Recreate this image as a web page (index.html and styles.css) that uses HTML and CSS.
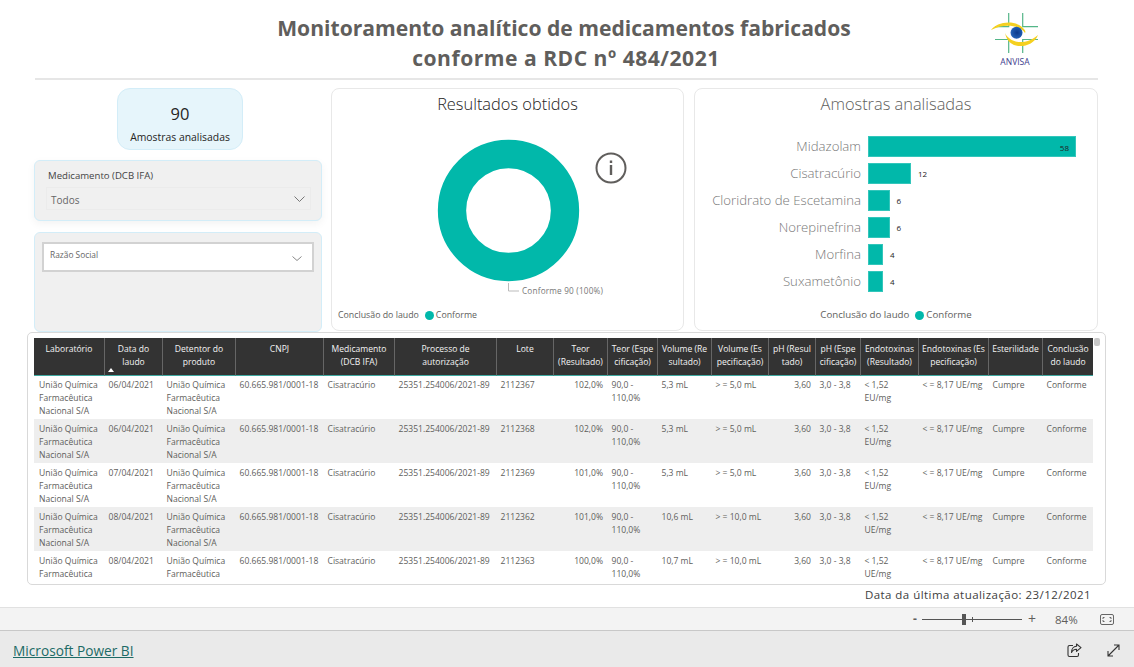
FILE: index.html
```html
<!DOCTYPE html>
<html lang="pt-BR">
<head>
<meta charset="utf-8">
<title>Monitoramento analítico de medicamentos</title>
<link rel="stylesheet" href="styles.css">
</head>
<body>
<main class="report">
  <header class="head">
    <h1 class="title">Monitoramento analítico de medicamentos fabricados<br><span class="title-second">conforme a RDC nº 484/2021</span></h1>
    <svg class="logo" width="50" height="58" viewBox="0 0 50 58">
      <defs>
        <radialGradient id="iris" cx=".55" cy=".5" r=".6">
          <stop offset="0" stop-color="#0b3a8c"/>
          <stop offset=".75" stop-color="#1f5cb0"/>
          <stop offset="1" stop-color="#3f78c4"/>
        </radialGradient>
      </defs>
      <g fill="none" stroke="#54b688" stroke-width="1.200">
        <path d="M5 14.700H18.700V1M32.700 1V14.700H48M5 27.500H18.700V41M32.700 41V27.500H48"/>
      </g>
      <path d="M1 18C6 11 22 7 32 15C35 18 36 19 35 21C30 13 14 11 1 18Z" fill="#f5d020"/>
      <path d="M15 21C19 30 34 35 48 23C44 33 32 36 24 33C19 31 16 26 15 21Z" fill="#f5d020"/>
      <circle cx="26.500" cy="20.700" r="6" fill="url(#iris)"/>
      <text class="logo-text" x="25" y="53" text-anchor="middle">ANVISA</text>
    </svg>
  </header>

  <section class="visuals">
    <div class="left">
      <div class="kpi">
        <div class="kpi-value">90</div>
        <div class="kpi-label">Amostras analisadas</div>
      </div>
      <div class="slicer slicer-a">
        <div class="slicer-title">Medicamento (DCB IFA)</div>
        <div class="drop">
          <span>Todos</span>
          <svg width="11" height="6" viewBox="0 0 11 6"><path d="M.5.5l5 5 5-5" fill="none" stroke="#777"/></svg>
        </div>
      </div>
      <div class="slicer slicer-b">
        <div class="drop-white">
          <span>Razão Social</span>
          <svg width="10" height="5" viewBox="0 0 10 5"><path d="M.5.5l4.500 4 4.500-4" fill="none" stroke="#888"/></svg>
        </div>
      </div>
    </div>

    <div class="card donut-card">
      <h2 class="card-title dark">Resultados obtidos</h2>
      <svg class="donut" width="351" height="181" viewBox="0 0 351 181">
        <circle cx="176.500" cy="82.500" r="56.500" fill="none" stroke="#01b8aa" stroke-width="28.300"/>
        <path d="M176.500 155V163H187" fill="none" stroke="#bbb"/>
        <text class="donut-label" x="190" y="165.500">Conforme 90 (100%)</text>
      </svg>
      <svg class="info" width="32" height="32" viewBox="0 0 32 32">
        <circle cx="16" cy="16" r="14.500" fill="none" stroke="#605e5c" stroke-width="2"/>
        <rect x="14.800" y="13" width="2.400" height="10" fill="#605e5c"/>
        <rect x="14.800" y="8.500" width="2.400" height="2.500" fill="#605e5c"/>
      </svg>
      <div class="legend legend-left">
        <span>Conclusão do laudo</span><i class="dot"></i><span>Conforme</span>
      </div>
    </div>

    <div class="card bar-card">
      <h2 class="card-title">Amostras analisadas</h2>
      <div class="bars">
        <div class="bar-label">Midazolam</div><div class="bar-cell"><div class="bar bar-58"><b>58</b></div></div>
        <div class="bar-label">Cisatracúrio</div><div class="bar-cell"><div class="bar bar-12"></div><b>12</b></div>
        <div class="bar-label">Cloridrato de Escetamina</div><div class="bar-cell"><div class="bar bar-6"></div><b>6</b></div>
        <div class="bar-label">Norepinefrina</div><div class="bar-cell"><div class="bar bar-6"></div><b>6</b></div>
        <div class="bar-label">Morfina</div><div class="bar-cell"><div class="bar bar-4"></div><b>4</b></div>
        <div class="bar-label">Suxametônio</div><div class="bar-cell"><div class="bar bar-4"></div><b>4</b></div>
      </div>
      <div class="legend legend-center">
        <span>Conclusão do laudo</span><i class="dot"></i><span>Conforme</span>
      </div>
    </div>
  </section>

  <section class="table-card">
    <i class="thumb"></i>
    <table class="grid">
      <thead>
        <tr>
          <th>Laboratório</th>
          <th>Data do<br>laudo<i class="sort"></i></th>
          <th>Detentor do<br>produto</th>
          <th>CNPJ</th>
          <th>Medicamento<br>(DCB IFA)</th>
          <th>Processo de<br>autorização</th>
          <th>Lote</th>
          <th>Teor<br>(Resultado)</th>
          <th>Teor (Espe<br>cificação)</th>
          <th>Volume (Re<br>sultado)</th>
          <th>Volume (Es<br>pecificação)</th>
          <th>pH (Resul<br>tado)</th>
          <th>pH (Espe<br>cificação)</th>
          <th>Endotoxinas<br>(Resultado)</th>
          <th>Endotoxinas (Es<br>pecificação)</th>
          <th>Esterilidade</th>
          <th>Conclusão<br>do laudo</th>
        </tr>
      </thead>
      <tbody>
        <tr><td>União Química Farmacêutica Nacional S/A</td><td>06/04/2021</td><td>União Química Farmacêutica Nacional S/A</td><td>60.665.981/0001-18</td><td>Cisatracúrio</td><td>25351.254006/2021-89</td><td>2112367</td><td class="num">102,0%</td><td>90,0 - 110,0%</td><td>5,3 mL</td><td>&gt; = 5,0 mL</td><td class="num">3,60</td><td>3,0 - 3,8</td><td>&lt; 1,52 EU/mg</td><td>&lt; = 8,17 UE/mg</td><td>Cumpre</td><td>Conforme</td></tr>
        <tr><td>União Química Farmacêutica Nacional S/A</td><td>06/04/2021</td><td>União Química Farmacêutica Nacional S/A</td><td>60.665.981/0001-18</td><td>Cisatracúrio</td><td>25351.254006/2021-89</td><td>2112368</td><td class="num">102,0%</td><td>90,0 - 110,0%</td><td>5,3 mL</td><td>&gt; = 5,0 mL</td><td class="num">3,60</td><td>3,0 - 3,8</td><td>&lt; 1,52 EU/mg</td><td>&lt; = 8,17 UE/mg</td><td>Cumpre</td><td>Conforme</td></tr>
        <tr><td>União Química Farmacêutica Nacional S/A</td><td>07/04/2021</td><td>União Química Farmacêutica Nacional S/A</td><td>60.665.981/0001-18</td><td>Cisatracúrio</td><td>25351.254006/2021-89</td><td>2112369</td><td class="num">101,0%</td><td>90,0 - 110,0%</td><td>5,3 mL</td><td>&gt; = 5,0 mL</td><td class="num">3,60</td><td>3,0 - 3,8</td><td>&lt; 1,52 EU/mg</td><td>&lt; = 8,17 UE/mg</td><td>Cumpre</td><td>Conforme</td></tr>
        <tr><td>União Química Farmacêutica Nacional S/A</td><td>08/04/2021</td><td>União Química Farmacêutica Nacional S/A</td><td>60.665.981/0001-18</td><td>Cisatracúrio</td><td>25351.254006/2021-89</td><td>2112362</td><td class="num">101,0%</td><td>90,0 - 110,0%</td><td>10,6 mL</td><td>&gt; = 10,0 mL</td><td class="num">3,60</td><td>3,0 - 3,8</td><td>&lt; 1,52 UE/mg</td><td>&lt; = 8,17 UE/mg</td><td>Cumpre</td><td>Conforme</td></tr>
        <tr><td>União Química Farmacêutica</td><td>08/04/2021</td><td>União Química Farmacêutica</td><td>60.665.981/0001-18</td><td>Cisatracúrio</td><td>25351.254006/2021-89</td><td>2112363</td><td class="num">100,0%</td><td>90,0 - 110,0%</td><td>10,7 mL</td><td>&gt; = 10,0 mL</td><td class="num">3,60</td><td>3,0 - 3,8</td><td>&lt; 1,52 UE/mg</td><td>&lt; = 8,17 UE/mg</td><td>Cumpre</td><td>Conforme</td></tr>
      </tbody>
    </table>
  </section>

  <p class="updated">Data da última atualização: 23/12/2021</p>
</main>

<div class="zoombar">
  <span class="zoom-minus">-</span>
  <div class="slider"><i class="slider-tick"></i><i class="slider-thumb"></i></div>
  <span class="zoom-plus">+</span>
  <span class="zoom-pct">84%</span>
  <svg class="fit" width="14" height="11" viewBox="0 0 14 11"><rect x=".5" y=".5" width="13" height="10" rx="1.500" fill="none" stroke="#666"/><path d="M3 3.500H4.500M3 3.500V5M9.500 3.500H11M11 3.500V5M3 6V7.500H4.500M11 6V7.500H9.500" fill="none" stroke="#666"/></svg>
</div>

<footer class="footer">
  <a class="brand" href="#">Microsoft Power BI</a>
  <div class="foot-icons">
    <svg width="15" height="15" viewBox="0 0 15 15"><path d="M6 2.500H2.500a1.500 1.500 0 0 0-1.500 1.500V12a1.500 1.500 0 0 0 1.500 1.500H10A1.500 1.500 0 0 0 11.500 12V10" fill="none" stroke="#333" stroke-width="1.100"/><path d="M9.500 1l4.500 3.700-4.500 3.700V6.200C7 6.200 5.500 7.200 4.500 9.500 4.500 6 6.500 3.300 9.500 3.200Z" fill="none" stroke="#333" stroke-width="1.100" stroke-linejoin="round"/></svg>
    <svg width="13" height="13" viewBox="0 0 13 13"><path d="M1 12L12 1M7 1H12V6M1 7V12H6" fill="none" stroke="#333" stroke-width="1.100"/></svg>
  </div>
</footer>
</body>
</html>
```

FILE: styles.css
```css
* { box-sizing: border-box; }
html, body { margin: 0; padding: 0; }
body {
  width: 1134px;
  height: 667px;
  overflow: hidden;
  background: #fff;
  font-family: "Open Sans", "Noto Sans", sans-serif;
  color: #605e5c;
  display: flex;
  flex-direction: column;
}
.report { height: 607px; flex: none; }

/* header */
.head {
  height: 80px;
  margin: 0 36px 0 35px;
  padding: 12px 0 0 195px;
  border-bottom: 2px solid #e6e6e6;
  display: flex;
  align-items: flex-start;
}
.title {
  margin: 1px 0 0;
  width: 668px;
  flex: none;
  text-align: center;
  font-family: "Open Sans", sans-serif;
  font-size: 21.100px;
  font-weight: 700;
  line-height: 30px;
  color: #605e5c;
}
.title-second { letter-spacing: .5px; padding-left: 4px; }
.logo { flex: none; margin-left: 92px; margin-top: 0; }
.logo-text { font-size: 8.500px; fill: #3c3c8c; font-family: "Open Sans", sans-serif; }

/* top visuals */
.visuals {
  display: grid;
  grid-template-columns: 288px 353px 404px;
  column-gap: 9px;
  height: 244px;
  margin: 8px 0 0 34px;
}
.left { display: flex; flex-direction: column; }
.kpi {
  width: 126px;
  height: 62px;
  margin-left: 83px;
  padding-top: 13px;
  border: 1px solid #d3edf8;
  border-radius: 13px;
  background: #e6f5fb;
  text-align: center;
  color: #252423;
}
.kpi-value { font-size: 16.500px; line-height: 24px; }
.kpi-label { font-size: 10.400px; line-height: 14px; margin-top: 4px; }
.slicer {
  border: 1px solid #d3edf8;
  border-radius: 6px;
  background: #f0f0f0;
}
.slicer-a {
  height: 61px;
  margin-top: 10px;
  padding: 8px 10px 0 11px;
  box-shadow: 0 3px 8px rgba(0, 0, 0, .05);
}
.slicer-title { font-size: 9.600px; line-height: 14px; color: #444; padding-left: 2px; }
.drop {
  height: 23px;
  margin-top: 4px;
  padding: 1px 5px 0 4px;
  border: 1px solid #ebebeb;
  display: flex;
  align-items: center;
  justify-content: space-between;
  font-size: 10px;
  color: #666;
}
.drop span { padding-top: 2px; }
.slicer-b {
  height: 100px;
  margin-top: 11px;
  padding: 9px 7px 0;
}
.drop-white {
  height: 30px;
  padding: 4px 10px 0 6px;
  background: #fff;
  border: 2px solid #d2d2d2;
  display: flex;
  justify-content: space-between;
  font-size: 8.400px;
  line-height: 14px;
  color: #666;
}
.drop-white svg { margin-top: 8px; }

.card {
  position: relative;
  height: 243px;
  border: 1px solid #e8e8e8;
  border-radius: 8px;
  background: #fff;
}
.bar-card { width: 404px; margin-left: 1px; }
.card-title {
  margin: 0;
  text-align: center;
  font-size: 16.400px;
  font-weight: 300;
  line-height: 30px;
  color: #605e5c;
}
.card-title.dark { color: #252423; }
.donut { display: block; margin-top: 9px; }
.donut-label { font-size: 8.200px; fill: #777; letter-spacing: .2px; }
.info { position: absolute; left: 263px; top: 63px; }
.legend {
  display: flex;
  align-items: center;
  font-size: 8.800px;
  line-height: 12px;
  color: #605e5c;
}
.legend-left { padding-left: 6px; margin-top: 0; }
.legend-center { justify-content: center; margin-top: 11px; font-size: 9.700px; }
.dot {
  width: 9px;
  height: 9px;
  margin: 0 2px 0 6px;
  border-radius: 50%;
  background: #01b8aa;
}

/* bars */
.bars {
  display: grid;
  grid-template-columns: 166px 1fr;
  grid-auto-rows: 27px;
  column-gap: 7px;
  margin-top: 17px;
}
.bar-label {
  text-align: right;
  font-size: 13.200px;
  line-height: 21px;
  color: #777;
  font-weight: 300;
  white-space: nowrap;
}
.bar-cell { display: flex; align-items: flex-start; }
.bar-cell b {
  font-size: 8px;
  font-weight: 400;
  line-height: 21px;
  color: #222;
  margin-left: 7px;
}
.bar {
  height: 21px;
  background: #01b8aa;
  border: 1px solid #33c6bb;
  flex: none;
  display: flex;
  justify-content: flex-end;
}
.bar b { margin: 0 6px 0 0; }
.bar-58 { width: 208px; }
.bar-12 { width: 43px; }
.bar-6 { width: 21.500px; }
.bar-4 { width: 15px; }

/* table */
.table-card {
  position: relative;
  height: 253px;
  width: 1079px;
  margin-left: 27px;
  padding: 5px 0 0 6px;
  border: 1px solid #d9d9d9;
  border-radius: 5px;
  background: #fff;
  overflow: hidden;
}
.thumb {
  position: absolute;
  left: 1066px;
  top: 5px;
  width: 6px;
  height: 8px;
  border-radius: 2px;
  background: #c8c8c8;
}
.grid {
  width: 1059px;
  table-layout: fixed;
  border-collapse: separate;
  border-spacing: 0;
  font-size: 8.550px;
  line-height: 13px;
}
.grid th {
  height: 38px;
  padding: 5px 0 0;
  vertical-align: top;
  text-align: center;
  font-weight: 400;
  color: #f3f3f3;
  background: #333;
  border-left: 1px solid #666;
  border-bottom: 1px solid #3fa9a1;
  position: relative;
  white-space: nowrap;
}
.grid th:first-child { border-left: 0; }
.sort {
  position: absolute;
  left: 3px;
  bottom: 3px;
  width: 0;
  height: 0;
  border: 3px solid transparent;
  border-top: 0;
  border-bottom: 4px solid #fff;
}
.grid td {
  height: 44px;
  padding: 4px 3px 0 4.500px;
  vertical-align: top;
  color: #605e5c;
  white-space: normal;
}
.grid tbody tr:first-child td { height: 43px; padding-top: 3px; }
.grid td:first-child { padding-left: 5px; }
.grid tbody tr:nth-child(even) td { background: #eee; }
.grid td.num { text-align: right; padding-right: 4px; }
.grid th:nth-child(1) { width: 70px; }
.grid th:nth-child(2) { width: 58px; }
.grid th:nth-child(3) { width: 73px; }
.grid th:nth-child(4) { width: 88px; }
.grid th:nth-child(5) { width: 71px; }
.grid th:nth-child(6) { width: 102px; }
.grid th:nth-child(7) { width: 57px; }
.grid th:nth-child(8) { width: 54px; }
.grid th:nth-child(9) { width: 50px; }
.grid th:nth-child(10) { width: 54px; }
.grid th:nth-child(11) { width: 57px; }
.grid th:nth-child(12) { width: 47px; }
.grid th:nth-child(13) { width: 45px; }
.grid th:nth-child(14) { width: 58px; }
.grid th:nth-child(15) { width: 70px; }
.grid th:nth-child(16) { width: 54px; }
.grid th:nth-child(17) { width: 51px; }

.updated {
  margin: 0;
  padding: 2px 43px 0 0;
  text-align: right;
  font-size: 11.500px;
  line-height: 16px;
  color: #404040;
  letter-spacing: .45px;
}

/* bottom bars */
.zoombar {
  flex: none;
  height: 24px;
  background: #f3f3f3;
  border-top: 1px solid #e1e1e1;
  border-bottom: 1px solid #c8c8c8;
  display: flex;
  align-items: center;
  padding-left: 913px;
  font-size: 12px;
  color: #605e5c;
}
.zoom-minus { width: 9px; font-weight: 700; line-height: 20px; }
.slider {
  position: relative;
  width: 100px;
  height: 1px;
  background: #555;
}
.slider-thumb {
  position: absolute;
  left: 40px;
  top: -5px;
  width: 4px;
  height: 11px;
  background: #555;
}
.slider-tick {
  position: absolute;
  left: 50px;
  top: -2px;
  width: 1px;
  height: 5px;
  background: #555;
}
.zoom-plus { margin-left: 6px; font-size: 14px; line-height: 20px; }
.zoom-pct { margin-left: 19px; font-size: 11.500px; }
.fit { margin-left: 22px; }
.footer {
  flex: none;
  height: 36px;
  padding: 3px 14px 0 13px;
  background: #eaeaea;
  display: flex;
  align-items: center;
  justify-content: space-between;
}
.brand {
  font-size: 13.700px;
  font-weight: 500;
  color: #1c6a66;
  text-decoration: underline;
}
.foot-icons { display: flex; align-items: center; gap: 25px; }
```
